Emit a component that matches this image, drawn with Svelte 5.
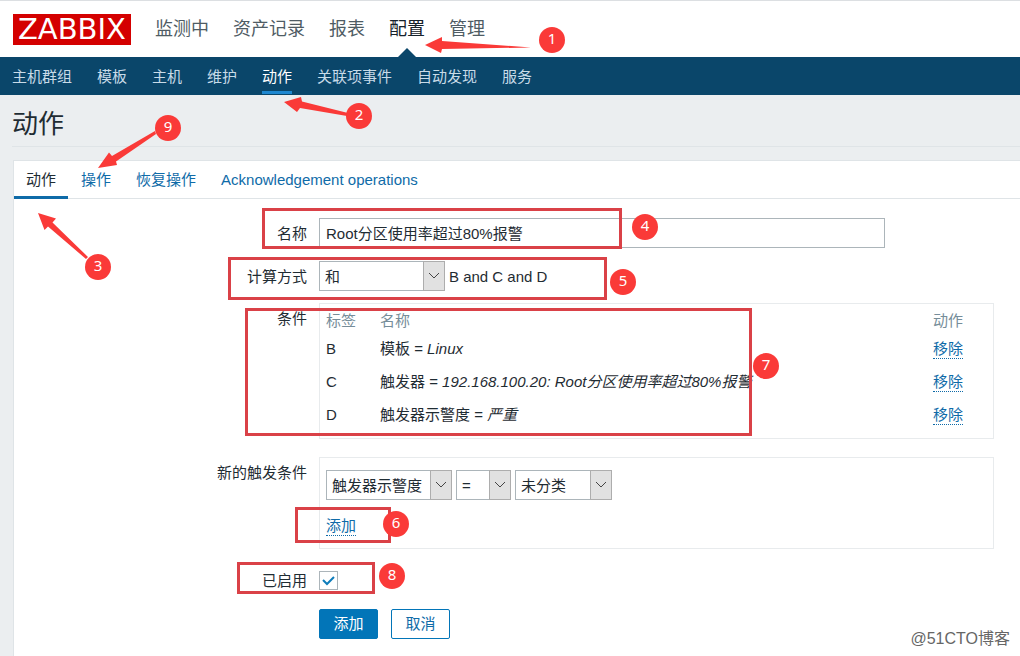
<script>
  const mainMenu = ['监测中', '资产记录', '报表', '配置', '管理'];
  const subMenu = ['主机群组', '模板', '主机', '维护', '动作', '关联项事件', '自动发现', '服务'];
  const tabs = ['动作', '操作', '恢复操作', 'Acknowledgement operations'];

  let activeTab = $state('动作');
  let name = $state('Root分区使用率超过80%报警');
  let enabled = $state(true);

  let conditions = $state([
    { label: 'B', type: '模板', value: 'Linux' },
    { label: 'C', type: '触发器', value: '192.168.100.20: Root分区使用率超过80%报警' },
    { label: 'D', type: '触发器示警度', value: '严重' }
  ]);

  let formula = $derived(conditions.map((c) => c.label).join(' and '));

  function removeCondition(event, label) {
    event.preventDefault();
    conditions = conditions.filter((c) => c.label !== label);
  }

  // tutorial marks drawn over the page
  const frames = [
    { x: 262, y: 208, w: 360, h: 41 },
    { x: 228, y: 257, w: 379, h: 43 },
    { x: 245, y: 308, w: 507, h: 128 },
    { x: 295, y: 507, w: 96, h: 36 },
    { x: 237, y: 562, w: 138, h: 32 }
  ];
  const arrows = [
    '425,45 442,37 442,41 531,47.5 442,49 441,53',
    '284,102 301,97 302,101.5 348,113 347,116 300,108 297,112',
    '98,168 109,152.5 112,156 155,131 156,134 116,161.5 117,165',
    '38,213 56,218.5 52.5,222.5 88,257 86,259 48,226.5 44.5,230'
  ];
  const steps = [
    { n: 1, x: 552, y: 40 },
    { n: 2, x: 359, y: 116 },
    { n: 3, x: 98, y: 267 },
    { n: 4, x: 645, y: 227 },
    { n: 5, x: 623, y: 282 },
    { n: 6, x: 396, y: 524 },
    { n: 7, x: 766, y: 366 },
    { n: 8, x: 392, y: 576 },
    { n: 9, x: 168, y: 128 }
  ];
</script>

{#snippet dropdown(id, label, size, options)}
  <span class="select {size}">
    <select {id} aria-label={label}>
      {#each options as option}
        <option>{option}</option>
      {/each}
    </select>
    <svg class="arrow" viewBox="0 0 22 30" aria-hidden="true">
      <rect x="0.5" y="0.5" width="21" height="29" />
      <path d="M6 12 l5 5 l5 -5" />
    </svg>
  </span>
{/snippet}

<div class="page">
  <header>
    <a class="logo" href="#home">ZABBIX</a>
    <nav class="main-menu">
      {#each mainMenu as item}
        <a href="#{item}" class:active={item === '配置'}>{item}</a>
      {/each}
    </nav>
  </header>

  <nav class="sub-menu">
    {#each subMenu as item}
      <a href="#{item}" class:active={item === '动作'}>{item}</a>
    {/each}
  </nav>

  <h1>动作</h1>

  <main>
    <div class="tabs" role="tablist">
      {#each tabs as tab}
        <button
          role="tab"
          aria-selected={tab === activeTab}
          class:active={tab === activeTab}
          onclick={() => (activeTab = tab)}
        >
          {tab}
        </button>
      {/each}
    </div>

    <form onsubmit={(e) => e.preventDefault()}>
      <label class="caption" for="name">名称</label>
      <div class="field">
        <input id="name" class="name" type="text" bind:value={name} />
      </div>

      <label class="caption" for="evaltype">计算方式</label>
      <div class="field inline">
        {@render dropdown('evaltype', '计算方式', 'medium', ['和', '或'])}
        <span class="formula">{formula}</span>
      </div>

      <span class="caption" id="conditions-label">条件</span>
      <div class="field box conditions">
        <table aria-labelledby="conditions-label">
          <thead>
            <tr>
              <th class="tag">标签</th>
              <th>名称</th>
              <th class="action">动作</th>
            </tr>
          </thead>
          <tbody>
            {#each conditions as condition (condition.label)}
              <tr>
                <td>{condition.label}</td>
                <td>{condition.type} = <em>{condition.value}</em></td>
                <td>
                  <a class="link" href="#remove" onclick={(e) => removeCondition(e, condition.label)}>移除</a>
                </td>
              </tr>
            {/each}
          </tbody>
        </table>
      </div>

      <label class="caption" for="condition-type">新的触发条件</label>
      <div class="field box new-condition">
        <div class="selects">
          {@render dropdown('condition-type', '新的触发条件', 'medium', ['触发器示警度', '触发器', '模板'])}
          {@render dropdown('condition-operator', '运算符', 'small', ['=', '<>'])}
          {@render dropdown('condition-value', '示警度', 'regular', ['未分类', '严重'])}
        </div>
        <a class="link" href="#add">添加</a>
      </div>

      <label class="caption check" for="enabled">已启用</label>
      <div class="field check">
        <span class="checkbox">
          <input id="enabled" type="checkbox" bind:checked={enabled} />
          {#if enabled}
            <svg viewBox="0 0 19 19" aria-hidden="true"><path d="M4 9 l4 4 l7 -7" /></svg>
          {/if}
        </span>
      </div>

      <div class="buttons">
        <button class="primary" type="submit">添加</button>
        <button type="button">取消</button>
      </div>
    </form>
  </main>

  <svg class="marks" width="1020" height="656" aria-hidden="true">
    {#each frames as f}
      <rect x={f.x + 1.5} y={f.y + 1.5} width={f.w - 3} height={f.h - 3} />
    {/each}
    {#each arrows as points}
      <polygon {points} />
    {/each}
    {#each steps as s}
      <circle cx={s.x} cy={s.y} r="13" />
      <text x={s.x} y={s.y + 4}>{s.n}</text>
    {/each}
  </svg>

  <span class="watermark">@51CTO博客</span>
</div>

<style>
  :global(body) {
    margin: 0;
    background: #ebeef0;
  }

  .page {
    position: relative;
    display: flex;
    flex-direction: column;
    min-height: 100vh;
    font-family: 'Liberation Sans', 'Noto Sans CJK SC', sans-serif;
    font-size: 15px;
    line-height: 20px;
    color: #1f2c33;
  }

  a {
    color: #0f6ba8;
    text-decoration: none;
  }

  header {
    display: flex;
    align-items: center;
    gap: 24px;
    height: 56px;
    padding: 0 13px;
    background: #fff;
    border-top: 1px solid #dcdfe2;
  }

  .logo {
    padding: 0 5px;
    background: #d40000;
    color: #fff;
    font-family: 'DejaVu Sans', sans-serif;
    font-size: 29px;
    line-height: 31px;
  }

  .main-menu {
    display: flex;
    align-self: stretch;
    gap: 24px;
    font-size: 18px;
  }

  .main-menu a {
    position: relative;
    line-height: 56px;
    color: #4f5c64;
  }

  .main-menu a.active {
    color: #16222b;
  }

  .main-menu a.active::after {
    content: '';
    position: absolute;
    bottom: 0;
    left: calc(50% - 9px);
    border: 9px solid transparent;
    border-top: 0;
    border-bottom-color: #0a466a;
  }

  .sub-menu {
    display: flex;
    gap: 25px;
    height: 38px;
    padding: 0 12px;
    background: #0a466a;
  }

  .sub-menu a {
    height: 34px;
    line-height: 40px;
    color: #c8dbe8;
  }

  .sub-menu a.active {
    color: #fff;
    border-bottom: 3px solid #1e87d0;
  }

  h1 {
    margin: 0 0 13px 12px;
    padding: 16px 0 8px;
    border-bottom: 1px solid #dfe4e7;
    font-size: 26px;
    font-weight: 400;
    line-height: 27px;
  }

  main {
    flex: 1;
    margin-left: 13px;
    background: #fff;
    border: 1px solid #dfe4e7;
    border-width: 1px 0 0 1px;
  }

  .tabs {
    display: flex;
    gap: 1px;
    border-bottom: 1px solid #dfe4e7;
  }

  .tabs button {
    height: 38px;
    margin-bottom: -1px;
    padding: 3px 12px 0;
    border: 0;
    border-bottom: 3px solid transparent;
    background: none;
    font: inherit;
    color: #0f6ba8;
    cursor: pointer;
  }

  .tabs button.active {
    border-bottom-color: #0f6ba8;
    color: #1f2c33;
  }

  form {
    display: grid;
    grid-template-columns: 293px minmax(0, 1fr);
    column-gap: 12px;
    padding: 19px 26px 17px 0;
  }

  .caption {
    padding-top: 6px;
    text-align: right;
  }

  .field {
    margin-bottom: 13px;
  }

  input,
  select,
  .buttons button {
    box-sizing: border-box;
    margin: 0;
    font: inherit;
    color: inherit;
  }

  .name {
    display: block;
    width: 100%;
    max-width: 566px;
    height: 30px;
    padding: 0 6px 2px;
    border: 1px solid #acb5ba;
    background: #fff;
  }

  .inline {
    display: flex;
    align-items: center;
    gap: 4px;
    margin-bottom: 12px;
  }

  .formula {
    padding-top: 2px;
  }

  .select {
    position: relative;
    display: flex;
  }

  .select select {
    width: 100%;
    height: 30px;
    padding: 2px 22px 0 5px;
    border: 1px solid #acb5ba;
    border-radius: 0;
    background: #fff;
    appearance: none;
  }

  .select.small {
    width: 55px;
  }

  .select.regular {
    width: 97px;
  }

  .select.medium {
    width: 126px;
  }

  .arrow {
    position: absolute;
    top: 0;
    right: 0;
    width: 22px;
    height: 30px;
    pointer-events: none;
  }

  .arrow rect {
    fill: #e1e1e1;
    stroke: #adadad;
  }

  .arrow path {
    fill: none;
    stroke: #444;
  }

  .box {
    border: 1px solid #e8ebed;
  }

  .conditions {
    padding: 5px 6px 7px;
    margin-bottom: 18px;
  }

  table {
    width: 100%;
    border-collapse: collapse;
  }

  th,
  td {
    padding: 0;
    text-align: left;
    font-weight: 400;
  }

  th {
    height: 23px;
    color: #768d99;
  }

  td {
    height: 33px;
  }

  .tag,
  .action {
    width: 54px;
  }

  .link {
    display: inline-block;
    line-height: 18px;
    border-bottom: 1px dotted #0f6ba8;
  }

  .new-condition {
    padding: 12px 6px;
    margin-bottom: 20px;
  }

  .selects {
    display: flex;
    gap: 4px;
    margin-bottom: 16px;
  }

  .caption.check {
    padding: 2px 0 0;
  }

  .field.check {
    margin-bottom: 19px;
  }

  .checkbox {
    position: relative;
    display: block;
    width: 19px;
    height: 19px;
    margin-top: 2px;
  }

  .checkbox input {
    display: block;
    width: 19px;
    height: 19px;
    border: 1px solid #acb5ba;
    background: #fff;
    appearance: none;
  }

  .checkbox svg {
    position: absolute;
    inset: 0;
    pointer-events: none;
  }

  .checkbox path {
    fill: none;
    stroke: #0f7dbb;
    stroke-width: 2;
  }

  .buttons {
    grid-column: 2;
    display: flex;
    gap: 13px;
  }

  .buttons button {
    height: 30px;
    width: 59px;
    padding: 0;
    border: 1px solid #0275b8;
    border-radius: 2px;
    background: #fff;
    color: #0f6ba8;
    cursor: pointer;
  }

  .buttons .primary {
    background: #0275b8;
    color: #fff;
  }

  .marks {
    position: absolute;
    top: 0;
    left: 0;
    pointer-events: none;
  }

  .marks rect {
    fill: none;
    stroke: #da4147;
    stroke-width: 3;
  }

  .marks polygon,
  .marks circle {
    fill: #fa3a38;
  }

  .marks text {
    fill: #fff;
    font-family: 'Noto Sans', sans-serif;
    font-size: 15px;
    text-anchor: middle;
  }

  .watermark {
    position: absolute;
    right: 10px;
    bottom: 7px;
    color: #666;
    font-size: 16px;
    text-shadow: 1px 1px 0 #fff;
  }
</style>
